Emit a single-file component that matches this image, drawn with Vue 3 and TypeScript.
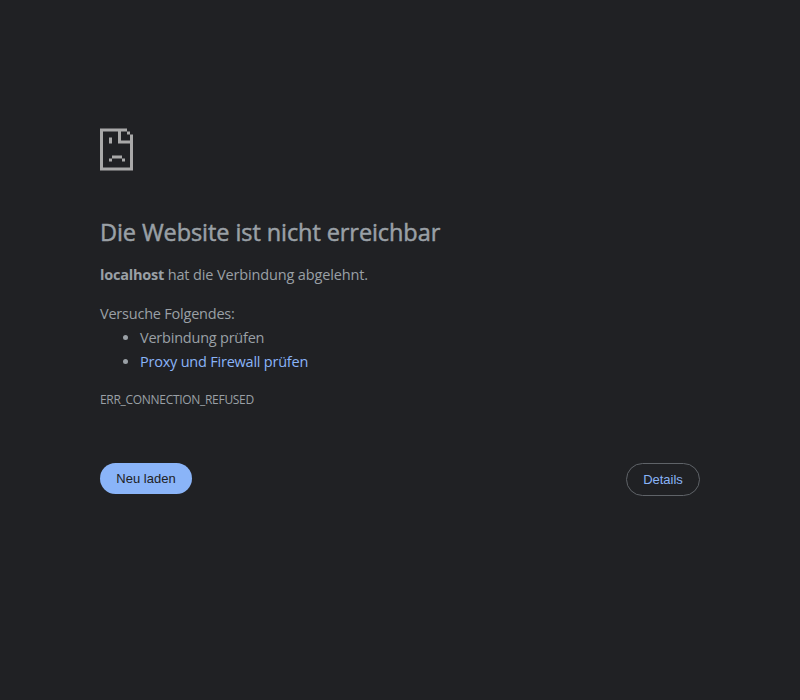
<script setup lang="ts">
const suggestions: { text: string; link: boolean }[] = [
  { text: 'Verbindung prüfen', link: false },
  { text: 'Proxy und Firewall prüfen', link: true },
]
</script>

<template>
  <main class="page">
    <svg class="icon" width="33" height="43" viewBox="0 0 33 43" fill="currentColor">
      <path d="M0 .5H27V3.5H21V12.5H30V6.5H33V42.5H0ZM3 3.5V39.5H30V15.5H18V3.5ZM27 3.5H30V6.5H27Z" fill-rule="evenodd" />
      <path d="M9 9.5H12V15.5H9ZM12 27.5H22V30.5H12ZM9 30.5H12V33.5H9ZM22 30.5H25V33.5H22Z" />
    </svg>
    <h1>Die Website ist nicht erreichbar</h1>
    <p class="summary"><strong>localhost</strong> hat die Verbindung abgelehnt.</p>
    <p class="try">Versuche Folgendes:</p>
    <ul>
      <li v-for="s in suggestions" :key="s.text">
        <a v-if="s.link">{{ s.text }}</a>
        <span v-else>{{ s.text }}</span>
      </li>
    </ul>
    <div class="code">ERR_CONNECTION_REFUSED</div>
    <div class="buttons">
      <button class="reload">Neu laden</button>
      <button class="details">Details</button>
    </div>
  </main>
</template>

<style>
body { background: #202124; }
</style>

<style scoped>
.page { width: 600px; margin: 0 auto; padding-top: 128px; color: #9aa0a6; font: 14.5px/24px "Open Sans", "Noto Sans", sans-serif; letter-spacing: -0.22px; }
.icon { display: block; color: #a9a9a9; }
h1 { margin: 43px 0 13px; font-size: 23.5px; line-height: 36px; font-weight: 500; letter-spacing: -0.08px; -webkit-text-stroke: 0.5px currentColor; }
p { margin: 0; }
.summary { line-height: 23px; letter-spacing: -0.14px; }
strong { letter-spacing: -0.22px; }
.try { margin-top: 16px; }
ul { margin: 0; padding-left: 40px; }
a { color: #8ab4f8; }
.code { margin-top: 14px; font-size: 12px; line-height: 24px; letter-spacing: -0.3px; }
.buttons { display: flex; justify-content: space-between; align-items: flex-start; margin-top: 51px; }
button { box-sizing: border-box; border: 0; border-radius: 20px; padding: 0; font: 13px "Liberation Sans", sans-serif; }
.reload { width: 92px; height: 31px; background: #8ab4f8; color: #202124; }
.details { width: 74px; height: 33px; background: none; border: 1px solid #5f6368; color: #8ab4f8; }
</style>
